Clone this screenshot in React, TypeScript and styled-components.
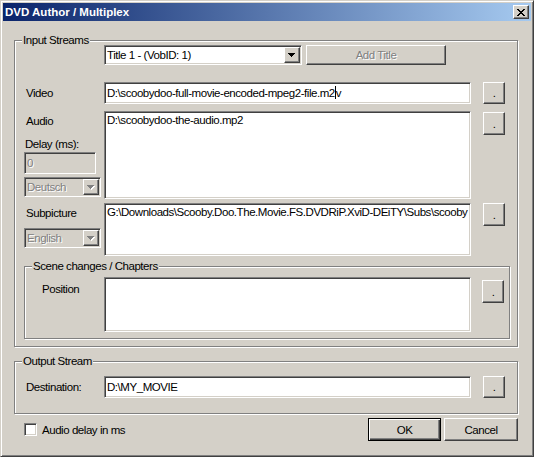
import React from "react";
import styled, { createGlobalStyle, css } from "styled-components";

const FONT = `"Liberation Sans", Arial, sans-serif`;
const FACE = "#D4D0C8";

const GlobalStyle = createGlobalStyle`
  html, body { margin: 0; padding: 0; background: ${FACE}; }
  body { font-family: ${FONT}; font-size: 11.5px; letter-spacing: -0.45px; color: #000; }
  * { box-sizing: border-box; }
`;

const sunken = css`
  border: 1px solid;
  border-color: #808080 #fff #fff #808080;
  box-shadow: inset 1px 1px #404040, inset -1px -1px ${FACE};
`;

const raised = css`
  border: 1px solid;
  border-color: #fff #404040 #404040 #fff;
  box-shadow: inset -1px -1px #808080, inset 1px 1px ${FACE};
`;

const disabledText = css`
  color: #808080;
  text-shadow: 1px 1px 0 #fff;
`;

const Window = styled.div`
  width: 534px;
  height: 457px;
  background: ${FACE};
  border: 1px solid;
  border-color: ${FACE} #404040 #404040 ${FACE};
  box-shadow: inset 1px 1px #fff, inset -1px -1px #808080;
  padding: 2px;
  display: flex;
  flex-direction: column;
`;

const TitleBar = styled.div`
  height: 18px;
  flex-shrink: 0;
  display: flex;
  align-items: center;
  justify-content: space-between;
  padding: 0 2px 0 2px;
  background: linear-gradient(to right, #0a246a, #a6caf0);
`;

const TitleText = styled.span`
  font-weight: bold;
  font-size: 11.5px;
  letter-spacing: 0;
  color: #fff;
  line-height: 14px;
`;

const CloseButton = styled.div`
  ${raised};
  width: 16px;
  height: 14px;
  background: ${FACE};
  display: flex;
  align-items: center;
  justify-content: center;
`;

const Body = styled.div`
  flex: 1;
  display: flex;
  flex-direction: column;
  padding: 0 13px 0 11px;
`;

const GroupBox = styled.div<{ $mt: number; $pad: string }>`
  position: relative;
  margin-top: ${(p) => p.$mt}px;
  padding: ${(p) => p.$pad};
  border: 1px solid #808080;
  box-shadow: inset 1px 1px #fff, 1px 1px 0 #fff;
`;

const Caption = styled.span`
  position: absolute;
  top: -8px;
  left: 7px;
  padding: 0 1px;
  line-height: 14px;
  background: ${FACE};
  white-space: nowrap;
`;

const Row = styled.div<{ $mt?: number; $center?: boolean }>`
  display: flex;
  align-items: ${(p) => (p.$center ? "center" : "flex-start")};
  margin-top: ${(p) => p.$mt ?? 0}px;
`;

const LabelCol = styled.div<{ $w?: number }>`
  width: ${(p) => p.$w ?? 80}px;
  flex-shrink: 0;
  display: flex;
  flex-direction: column;
  align-items: flex-start;
`;

const Label = styled.div<{ $mt?: number; $ml?: number }>`
  line-height: 14px;
  margin-top: ${(p) => p.$mt ?? 0}px;
  margin-left: ${(p) => p.$ml ?? 2}px;
  white-space: nowrap;
`;

const TextBox = styled.div<{ $w: number; $h: number; $mt?: number; $disabled?: boolean; $multi?: boolean }>`
  ${sunken};
  flex-shrink: 0;
  width: ${(p) => p.$w}px;
  height: ${(p) => p.$h}px;
  margin-top: ${(p) => p.$mt ?? 0}px;
  background: ${(p) => (p.$disabled ? FACE : "#fff")};
  padding: ${(p) => (p.$multi ? "1px 2px" : "0 2px")};
  display: flex;
  align-items: ${(p) => (p.$multi ? "flex-start" : "center")};
  line-height: 14px;
  white-space: nowrap;
  overflow: hidden;
  ${(p) => p.$disabled && disabledText};
`;

const Caret = styled.span`
  display: inline-block;
  width: 1px;
  height: 13px;
  background: #000;
  vertical-align: middle;
  margin: 0 0 1px 0;
`;

const Combo = styled.div<{ $w: number; $mt?: number; $disabled?: boolean }>`
  ${sunken};
  flex-shrink: 0;
  width: ${(p) => p.$w}px;
  height: 20px;
  margin-top: ${(p) => p.$mt ?? 0}px;
  background: ${(p) => (p.$disabled ? FACE : "#fff")};
  padding: 1px 1px 1px 2px;
  display: flex;
  align-items: center;
  justify-content: space-between;
  line-height: 14px;
  white-space: nowrap;
  ${(p) => p.$disabled && disabledText};
`;

const DropButton = styled.div`
  ${raised};
  width: 16px;
  height: 16px;
  background: ${FACE};
  display: flex;
  align-items: center;
  justify-content: center;
  flex-shrink: 0;
`;

const PushButton = styled.div<{ $w: number; $h: number; $ml?: number; $mt?: number; $disabled?: boolean; $default?: boolean }>`
  ${raised};
  flex-shrink: 0;
  width: ${(p) => p.$w}px;
  height: ${(p) => p.$h}px;
  margin-left: ${(p) => p.$ml ?? 0}px;
  margin-top: ${(p) => p.$mt ?? 0}px;
  background: ${FACE};
  display: flex;
  align-items: center;
  justify-content: center;
  line-height: 14px;
  white-space: nowrap;
  ${(p) => p.$disabled && disabledText};
  ${(p) =>
    p.$default &&
    css`
      border: 1px solid #000;
      box-shadow: inset 1px 1px #fff, inset -1px -1px #404040, inset -2px -2px #808080;
    `};
`;

const Footer = styled.div`
  display: flex;
  align-items: center;
  margin-top: 4px;
  padding-left: 10px;
`;

const CheckBox = styled.div`
  ${sunken};
  width: 13px;
  height: 13px;
  background: #fff;
  flex-shrink: 0;
`;

const CheckLabel = styled.span`
  margin-left: 5px;
  line-height: 14px;
  flex: 1;
`;

const ButtonGroup = styled.div`
  display: flex;
  gap: 3px;
`;

function Arrow({ disabled }: { disabled?: boolean }) {
  const rows = [7, 5, 3, 1];
  return (
    <svg width="8" height="5" viewBox="0 0 8 5" shapeRendering="crispEdges">
      {disabled &&
        rows.map((w, i) => (
          <rect key={"s" + i} x={(7 - w) / 2 + 1} y={i + 1} width={w} height={1} fill="#fff" />
        ))}
      {rows.map((w, i) => (
        <rect key={i} x={(7 - w) / 2} y={i} width={w} height={1} fill={disabled ? "#808080" : "#000"} />
      ))}
    </svg>
  );
}

function CloseGlyph() {
  return (
    <svg width="8" height="7" viewBox="0 0 8 7" shapeRendering="crispEdges">
      <path
        d="M0 0h2v1H0zM6 0h2v1H6zM1 1h2v1H1zM5 1h2v1H5zM2 2h4v1H2zM3 3h2v1H3zM2 4h4v1H2zM1 5h2v1H1zM5 5h2v1H5zM0 6h2v1H0zM6 6h2v1H6z"
        fill="#000"
      />
    </svg>
  );
}

export default function App() {
  return (
    <>
      <GlobalStyle />
      <Window>
        <TitleBar>
          <TitleText>DVD Author / Multiplex</TitleText>
          <CloseButton>
            <CloseGlyph />
          </CloseButton>
        </TitleBar>
        <Body>
          <GroupBox $mt={19} $pad="4px 7px 7px 9px">
            <Caption>Input Streams</Caption>
            <Row>
              <LabelCol />
              <Combo $w={198}>
                <span>Title 1 - (VobID: 1)</span>
                <DropButton>
                  <Arrow />
                </DropButton>
              </Combo>
              <PushButton $w={140} $h={20} $ml={4} $disabled>
                Add Title
              </PushButton>
            </Row>

            <Row $mt={17} $center>
              <LabelCol>
                <Label>Video</Label>
              </LabelCol>
              <TextBox $w={367} $h={22}>
                <span>
                  D:\scoobydoo-full-movie-encoded-mpeg2-file.m2
                  <Caret />v
                </span>
              </TextBox>
              <PushButton $w={22} $h={22} $ml={12}>
                .
              </PushButton>
            </Row>

            <Row $mt={7}>
              <LabelCol>
                <Label $mt={3}>Audio</Label>
                <Label $mt={9} $ml={1}>
                  Delay (ms):
                </Label>
                <TextBox $w={72} $h={22} $mt={1} $disabled>
                  0
                </TextBox>
                <Combo $w={77} $mt={3} $disabled>
                  <span>Deutsch</span>
                  <DropButton>
                    <Arrow disabled />
                  </DropButton>
                </Combo>
              </LabelCol>
              <TextBox $w={367} $h={88} $multi>
                D:\scoobydoo-the-audio.mp2
              </TextBox>
              <PushButton $w={22} $h={23} $ml={12} $mt={1}>
                .
              </PushButton>
            </Row>

            <Row $mt={4}>
              <LabelCol>
                <Label $mt={3}>Subpicture</Label>
                <Combo $w={77} $mt={8} $disabled>
                  <span>English</span>
                  <DropButton>
                    <Arrow disabled />
                  </DropButton>
                </Combo>
              </LabelCol>
              <TextBox $w={367} $h={53} $multi>
                G:\Downloads\Scooby.Doo.The.Movie.FS.DVDRiP.XviD-DEiTY\Subs\scooby
              </TextBox>
              <PushButton $w={22} $h={23} $ml={12}>
                .
              </PushButton>
            </Row>

            <GroupBox $mt={10} $pad="10px 0 6px 0">
              <Caption>Scene changes / Chapters</Caption>
              <Row>
                <LabelCol $w={79}>
                  <Label $mt={5} $ml={17}>
                    Position
                  </Label>
                </LabelCol>
                <TextBox $w={367} $h={55} $multi />
                <PushButton $w={22} $h={23} $ml={11} $mt={3}>
                  .
                </PushButton>
              </Row>
            </GroupBox>
          </GroupBox>

          <GroupBox $mt={14} $pad="14px 7px 15px 9px">
            <Caption>Output Stream</Caption>
            <Row $center>
              <LabelCol>
                <Label>Destination:</Label>
              </LabelCol>
              <TextBox $w={367} $h={22}>
                D:\MY_MOVIE
              </TextBox>
              <PushButton $w={22} $h={22} $ml={12}>
                .
              </PushButton>
            </Row>
          </GroupBox>

          <Footer>
            <CheckBox />
            <CheckLabel>Audio delay in ms</CheckLabel>
            <ButtonGroup>
              <PushButton $w={73} $h={23} $default>
                OK
              </PushButton>
              <PushButton $w={74} $h={23}>
                Cancel
              </PushButton>
            </ButtonGroup>
          </Footer>
        </Body>
      </Window>
    </>
  );
}
